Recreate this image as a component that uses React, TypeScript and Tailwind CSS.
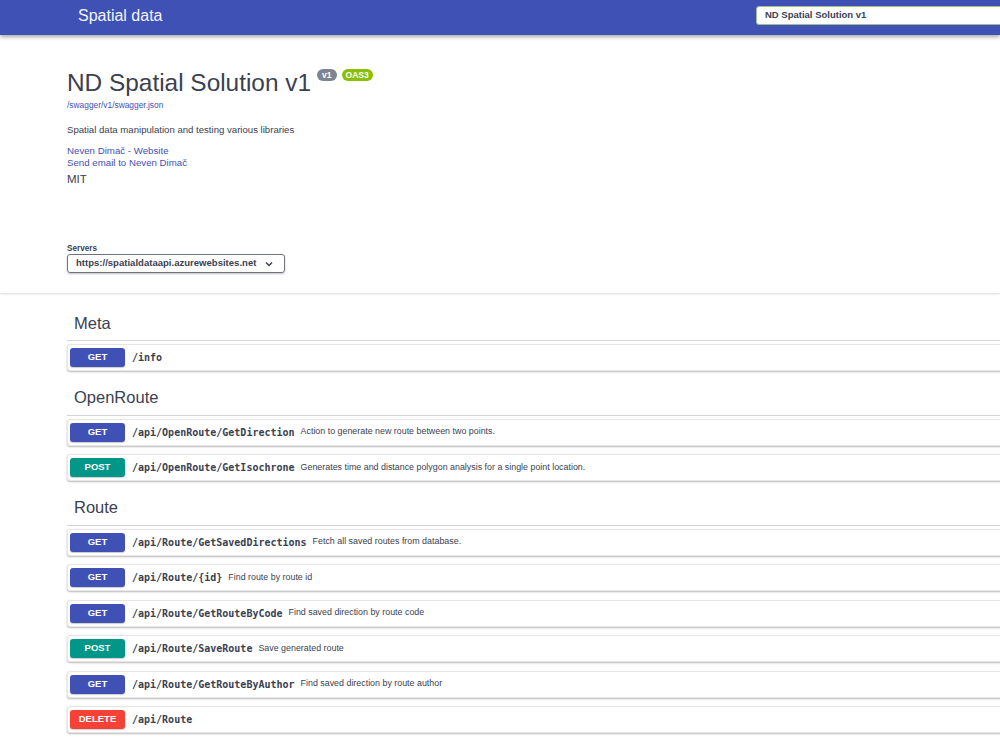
import React from "react";

type Op = { method: "GET" | "POST" | "DELETE"; path: string; summary?: string };

const methodClass: Record<Op["method"], string> = {
  GET: "bg-[#3f51b5]",
  POST: "bg-[#009688]",
  DELETE: "bg-[#f44336]",
};

const sections: { name: string; ops: Op[] }[] = [
  { name: "Meta", ops: [{ method: "GET", path: "/info" }] },
  {
    name: "OpenRoute",
    ops: [
      { method: "GET", path: "/api/OpenRoute/GetDirection", summary: "Action to generate new route between two points." },
      { method: "POST", path: "/api/OpenRoute/GetIsochrone", summary: "Generates time and distance polygon analysis for a single point location." },
    ],
  },
  {
    name: "Route",
    ops: [
      { method: "GET", path: "/api/Route/GetSavedDirections", summary: "Fetch all saved routes from database." },
      { method: "GET", path: "/api/Route/{id}", summary: "Find route by route id" },
      { method: "GET", path: "/api/Route/GetRouteByCode", summary: "Find saved direction by route code" },
      { method: "POST", path: "/api/Route/SaveRoute", summary: "Save generated route" },
      { method: "GET", path: "/api/Route/GetRouteByAuthor", summary: "Find saved direction by route author" },
      { method: "DELETE", path: "/api/Route" },
    ],
  },
];

function OpRow({ op }: { op: Op }) {
  return (
    <div className="h-[27px] mb-[8.5px] flex items-center border border-[#e6e6e6] rounded-[3px] shadow-[0_1px_2px_rgba(0,0,0,0.28)] bg-white pl-[2px]">
      <span
        className={`${methodClass[op.method]} min-w-[55px] h-[19px] px-[8px] rounded-[3px] text-white text-[9.5px] font-bold flex items-center justify-center shadow-[0_1px_1px_rgba(0,0,0,0.2)]`}
      >
        {op.method}
      </span>
      <span className="ml-[7px] font-['DejaVu_Sans_Mono',monospace] font-bold text-[10px] text-[#3b4151] whitespace-nowrap">
        {op.path}
      </span>
      {op.summary && (
        <span className="ml-[6px] text-[8.9px] text-[#3b4151] whitespace-nowrap">{op.summary}</span>
      )}
    </div>
  );
}

export default function App() {
  return (
    <div className="w-[1000px] h-[750px] overflow-hidden bg-white font-['Liberation_Sans',Arial,sans-serif] text-[#3b4151]">
      {/* Top bar */}
      <div className="relative z-10 h-[35px] bg-[#3f51b5] shadow-[0_2px_4px_rgba(0,0,0,0.35)] flex items-start">
        <span className="ml-[78px] mt-[6px] text-[16px] leading-[20px] text-[#f3f4fb]">Spatial data</span>
        <div className="ml-auto -mr-[24px] w-[268px] h-[19px] mt-[6px] bg-white border border-[#9cc18a] rounded-[3px] flex items-center pl-[8px]">
          <span className="text-[9.5px] font-bold text-[#3b4151]">ND Spatial Solution v1</span>
        </div>
      </div>

      {/* Info */}
      <div className="relative z-0 shadow-[0_1px_2px_rgba(0,0,0,0.15)] pb-[20px]">
        <div className="pl-[67px]">
          <div className="pt-[33px] flex items-start h-[62px]">
            <span className="text-[24.4px] leading-[29px] text-[#3b4151]">ND Spatial Solution v1</span>
            <span className="ml-[6px] mt-[1px] h-[12px] px-[5px] rounded-full bg-[#7d8492] text-white text-[8.5px] font-bold flex items-center">
              v1
            </span>
            <span className="ml-[5px] mt-[1px] h-[12px] px-[4px] rounded-full bg-[#89bf04] text-white text-[8.5px] font-bold flex items-center">
              OAS3
            </span>
          </div>
          <div className="mt-[2px] text-[8.4px] leading-[12px] text-[#3f51b5]">/swagger/v1/swagger.json</div>
          <div className="mt-[12px] text-[9.6px] leading-[14px] text-[#3b4151]">
            Spatial data manipulation and testing various libraries
          </div>
          <div className="mt-[8px] text-[9.7px] leading-[12px] text-[#3f51b5]">Neven Dimač - Website</div>
          <div className="text-[9.7px] leading-[12px] text-[#3f51b5]">Send email to Neven Dimač</div>
          <div className="mt-[2px] text-[11.5px] leading-[16px] text-[#3b4151]">MIT</div>
          <div className="mt-[57px] text-[8.2px] leading-[10px] font-bold text-[#3b4151]">Servers</div>
          <div className="w-[218px] h-[19px] border border-[#6f737c] rounded-[3px] shadow-[0_1px_2px_rgba(0,0,0,0.25)] flex items-center pl-[8px] pr-[11px]">
            <span className="text-[9.55px] font-bold text-[#3b4151] whitespace-nowrap">
              https://spatialdataapi.azurewebsites.net
            </span>
            <svg className="ml-auto" width="8" height="6" viewBox="0 0 8 6">
              <path d="M1 1.5 L4 4.5 L7 1.5" fill="none" stroke="#3b4151" strokeWidth="1.5" />
            </svg>
          </div>
        </div>
      </div>

      {/* Sections */}
      <div className="ml-[67px] -mr-[40px] pt-[13px] flex flex-col gap-[1px]">
        {sections.map((s) => (
          <div key={s.name}>
            <div className="h-[35px] flex items-center pl-[7px] border-b border-[#d3d5d9] text-[16.5px] text-[#3b4151]">
              {s.name}
            </div>
            <div className="mt-[3px]">
              {s.ops.map((op) => (
                <OpRow key={op.method + op.path} op={op} />
              ))}
            </div>
          </div>
        ))}
      </div>
    </div>
  );
}
